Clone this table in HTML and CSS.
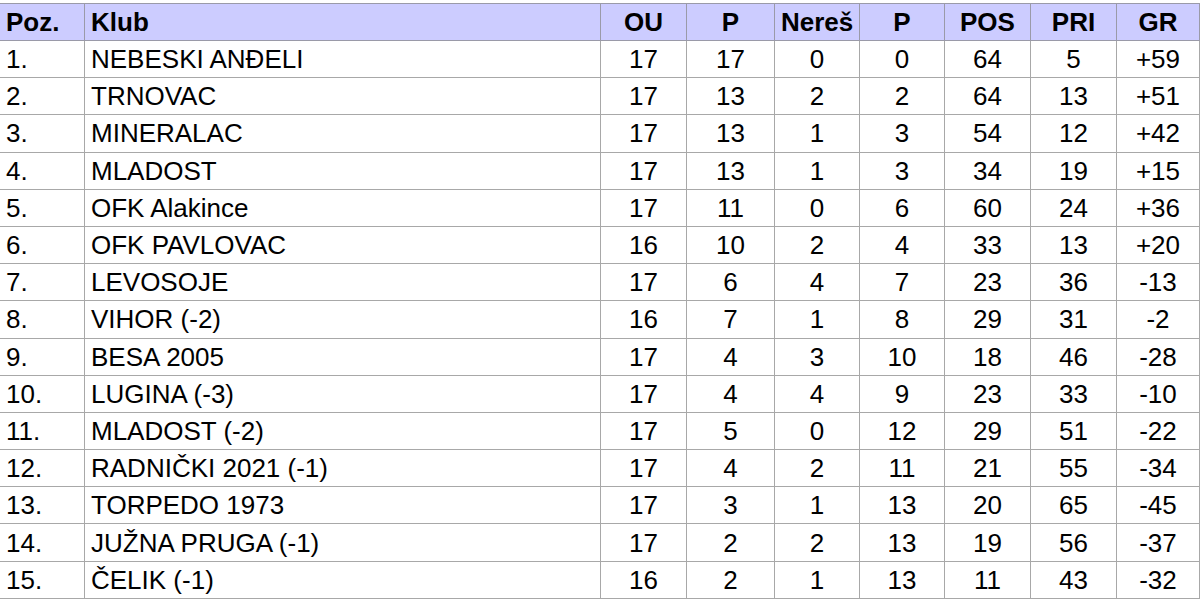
FILE: index.html
```html
<!DOCTYPE html>
<html>
<head>
<meta charset="utf-8">
<link rel="stylesheet" href="styles.css">
</head>
<body>
<table class="standings">
<colgroup>
<col class="c-poz"><col class="c-klub"><col class="c-ou"><col class="c-p"><col class="c-n"><col class="c-p2"><col class="c-pos"><col class="c-pri"><col class="c-gr">
</colgroup>
<thead>
<tr><th class="l">Poz.</th><th class="l">Klub</th><th>OU</th><th>P</th><th>Nereš</th><th>P</th><th>POS</th><th>PRI</th><th>GR</th></tr>
</thead>
<tbody>
<tr><td class="l">1.</td><td class="l">NEBESKI ANĐELI</td><td>17</td><td>17</td><td>0</td><td>0</td><td>64</td><td>5</td><td>+59</td></tr>
<tr><td class="l">2.</td><td class="l">TRNOVAC</td><td>17</td><td>13</td><td>2</td><td>2</td><td>64</td><td>13</td><td>+51</td></tr>
<tr><td class="l">3.</td><td class="l">MINERALAC</td><td>17</td><td>13</td><td>1</td><td>3</td><td>54</td><td>12</td><td>+42</td></tr>
<tr><td class="l">4.</td><td class="l">MLADOST</td><td>17</td><td>13</td><td>1</td><td>3</td><td>34</td><td>19</td><td>+15</td></tr>
<tr><td class="l">5.</td><td class="l">OFK Alakince</td><td>17</td><td>11</td><td>0</td><td>6</td><td>60</td><td>24</td><td>+36</td></tr>
<tr><td class="l">6.</td><td class="l">OFK PAVLOVAC</td><td>16</td><td>10</td><td>2</td><td>4</td><td>33</td><td>13</td><td>+20</td></tr>
<tr><td class="l">7.</td><td class="l">LEVOSOJE</td><td>17</td><td>6</td><td>4</td><td>7</td><td>23</td><td>36</td><td>-13</td></tr>
<tr><td class="l">8.</td><td class="l">VIHOR (-2)</td><td>16</td><td>7</td><td>1</td><td>8</td><td>29</td><td>31</td><td>-2</td></tr>
<tr><td class="l">9.</td><td class="l">BESA 2005</td><td>17</td><td>4</td><td>3</td><td>10</td><td>18</td><td>46</td><td>-28</td></tr>
<tr><td class="l">10.</td><td class="l">LUGINA (-3)</td><td>17</td><td>4</td><td>4</td><td>9</td><td>23</td><td>33</td><td>-10</td></tr>
<tr><td class="l">11.</td><td class="l">MLADOST (-2)</td><td>17</td><td>5</td><td>0</td><td>12</td><td>29</td><td>51</td><td>-22</td></tr>
<tr><td class="l">12.</td><td class="l">RADNIČKI 2021 (-1)</td><td>17</td><td>4</td><td>2</td><td>11</td><td>21</td><td>55</td><td>-34</td></tr>
<tr><td class="l">13.</td><td class="l">TORPEDO 1973</td><td>17</td><td>3</td><td>1</td><td>13</td><td>20</td><td>65</td><td>-45</td></tr>
<tr><td class="l">14.</td><td class="l">JUŽNA PRUGA (-1)</td><td>17</td><td>2</td><td>2</td><td>13</td><td>19</td><td>56</td><td>-37</td></tr>
<tr><td class="l">15.</td><td class="l">ČELIK (-1)</td><td>16</td><td>2</td><td>1</td><td>13</td><td>11</td><td>43</td><td>-32</td></tr>
</tbody>
</table>
</body>
</html>
```
FILE: styles.css
```css
html, body {
  margin: 0;
  padding: 0;
  background: #ffffff;
}
body {
  padding-top: 3px;
  font-family: "Liberation Sans", Arial, sans-serif;
  color: #000;
}
.standings {
  border-collapse: collapse;
  table-layout: fixed;
  width: 1200px;
  margin-left: -1px;
  font-size: 26px;
}
.c-poz { width: 85px; }
.c-klub { width: 516px; }
.c-ou { width: 86px; }
.c-p { width: 88px; }
.c-n { width: 85px; }
.c-p2 { width: 85px; }
.c-pos { width: 86px; }
.c-pri { width: 86px; }
.c-gr { width: 83px; }
.standings th,
.standings td {
  border: 1px solid #a8a8a8;
  padding: 0 6px;
  text-align: center;
  white-space: nowrap;
  overflow: hidden;
  line-height: 1;
}
.standings th {
  background: #ccccff;
  font-weight: bold;
  height: 36px;
  border-color: #9a9aa8;
}
.standings td {
  height: 36.2px;
}
.standings .l {
  text-align: left;
}
```
